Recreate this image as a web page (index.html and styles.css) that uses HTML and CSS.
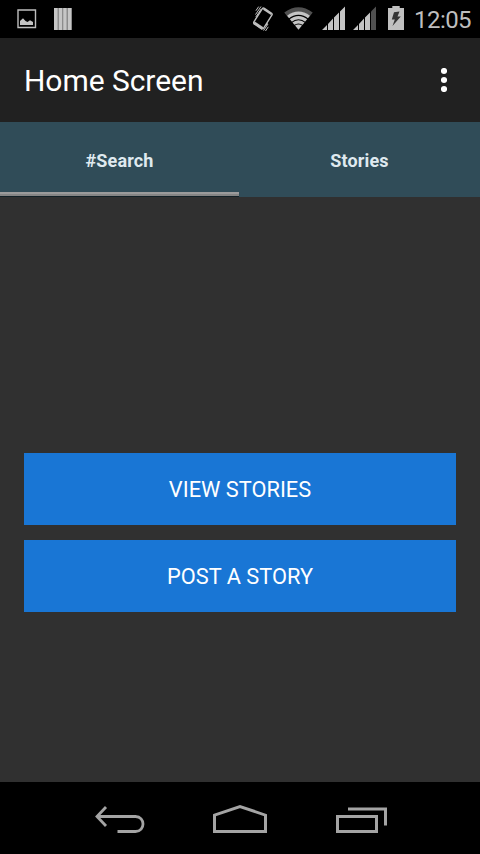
FILE: index.html
```html
<!DOCTYPE html>
<html lang="en">
<head>
<meta charset="utf-8">
<title>Home Screen</title>
<link rel="stylesheet" href="styles.css">
</head>
<body>
<div class="screen">
  <div class="status">
    <div class="notices">
      <svg width="20" height="20" viewBox="0 0 20 20"><path d="M1 1H18.5V18.5H1Z" fill="none" stroke="#bebebe" stroke-width="1.4"/><path d="M3 16V12L6 9.2L8.5 12L10.5 13L13 11.3L16 13V16Z" fill="#c4c4c4"/></svg>
      <svg width="18" height="22" viewBox="0 0 18 22"><path d="M0 0H18V22H0Z" fill="#8c8c8c"/><path d="M0 0H3.5V22H0ZM5 0H8V22H5ZM9.3 0H12.5V22H9.3ZM14 0H17V22H14Z" fill="#c6c6c6"/></svg>
    </div>
    <div class="system">
      <svg class="vibrate" width="22" height="26" viewBox="0 0 22 26"><g fill="none" stroke="#bebebe"><path d="M12.4 2.3L19.6 7.2Q20.5 8 20 9L11.5 22.3Q10.6 23.3 9.5 22.6L2.2 17.6Q1.3 16.9 1.9 15.8L10.2 2.8Q11.2 1.6 12.4 2.3Z" stroke-width="1.4"/><path d="M2 16.8L10.5 22.6" stroke-width="3"/><path d="M11.5 3L19.5 8.3" stroke-width="1.8"/><path d="M9 .5L3.5 8.6M6.7.6L3.9 4.7M9.2 3L3.8 11M11.6 24.6L16 18M13.5 25L16.3 20.8M13.5 20L15.5 17" stroke-width="1"/></g></svg>
      <svg class="wifi" width="29" height="23" viewBox="0 0 29 23"><path d="M.3 5.5Q14.5-5 28.7 5.5L26 9Q14.5 1 3 9Z" fill="#505050"/><path d="M3 8.7Q14.5.3 26 8.7L14.5 22.8Z" fill="#c4c4c4"/><path d="M4.5 12.4Q14.5 4.3 24.5 12.4M7.3 15.6Q14.5 9.8 21.7 15.6M10 18.6Q14.5 15.4 19 18.6" fill="none" stroke="#000" stroke-width="1.1"/></svg>
      <svg class="signal" width="23" height="25" viewBox="0 0 23 25"><path d="M0 24L5 19V24ZM6 24V18L11 12.5V24ZM12 24V11.5L17 6.5V24ZM18 24V5.5L23 .5V24Z" fill="#c4c4c4"/></svg>
      <svg class="signal second" width="23" height="25" viewBox="0 0 23 25"><path d="M0 24L5 19V24ZM6 24V18L11 12.5V24ZM12 24V11.5L17 6.5V24Z" fill="#c4c4c4"/><path d="M18 24V5.5L23 .5V24Z" fill="#505050"/></svg>
      <svg class="battery" width="16" height="24" viewBox="0 0 16 24"><path d="M4.3 0H11.7V2H16V24H0V2H4.3Z" fill="#c0c0c0"/><path d="M6 6.3L11.5 5.5L9.5 10.5H12.8L4.5 20L6.8 13.5H3.8Z" fill="#333"/></svg>
      <span class="clock">12:05</span>
    </div>
  </div>
  <header class="appbar">
    <h1>Home Screen</h1>
    <svg width="6" height="24" viewBox="0 0 6 24" fill="#fff"><circle cx="3" cy="3" r="3.1"/><circle cx="3" cy="12" r="3.1"/><circle cx="3" cy="21" r="3.1"/></svg>
  </header>
  <nav class="tabs">
    <div class="tab active">#Search</div>
    <div class="tab">Stories</div>
  </nav>
  <main class="content">
    <button>VIEW STORIES</button>
    <button>POST A STORY</button>
  </main>
  <footer class="navbar">
    <svg class="back" width="50" height="27" viewBox="0 0 50 27"><path d="M11 1L2 10.5L11 20M2 10.5H40.5C50.5 10.5 50.5 25.5 40.5 25.5H22.5" fill="none" stroke="#a4a4a4" stroke-width="2.8"/></svg>
    <svg class="home" width="54" height="29" viewBox="0 0 54 29"><path d="M1.5 11.2L27 2.5L52.5 11.2V27.5H1.5Z" fill="none" stroke="#a4a4a4" stroke-width="3"/></svg>
    <svg class="recent" width="51" height="26" viewBox="0 0 51 26"><path d="M1.5 9.5H40.5V24.5H1.5ZM12 2H49.5V18.5" fill="none" stroke="#a4a4a4" stroke-width="3"/></svg>
  </footer>
</div>
</body>
</html>
```
FILE: styles.css
```css
* { box-sizing: border-box; }
body { margin: 0; background: #303030; font-family: Roboto, sans-serif; }
svg { display: block; flex: none; }
.screen { width: 480px; height: 854px; display: flex; flex-direction: column; background: #303030; }
.status { height: 38px; flex: none; background: #000; display: flex; justify-content: space-between; padding: 0 9px 0 17px; }
.notices { display: flex; align-items: center; gap: 17px; }
.system { display: flex; align-items: flex-start; }
.vibrate { margin-top: 6px; }
.wifi { margin: 7px 0 0 10px; }
.signal { margin: 6px 0 0 9px; }
.second { margin-left: 8px; }
.battery { margin: 6px 0 0 12px; }
.clock { width: 57px; margin-left: 10px; font-size: 24px; letter-spacing: -0.55px; line-height: 40px; color: #bebebe; white-space: nowrap; }
.appbar { height: 84px; flex: none; background: #212121; display: flex; align-items: center; justify-content: space-between; padding: 0 33px 0 24px; }
h1 { margin: 0; padding-top: 2px; font-size: 30px; font-weight: 400; line-height: 36px; letter-spacing: -0.05px; color: #fff; }
.tabs { height: 75px; flex: none; background: #304c58; display: flex; }
.tab { flex: 0 0 239px; padding-top: 2px; text-align: center; font-size: 18px; font-weight: 700; line-height: 74px; letter-spacing: 0.15px; color: #dfe9ef; }
.tab + .tab { flex-basis: 241px; }
.active { background: linear-gradient(#9b9b9b 0 2px, #858585 2px 4px, #132127 4px) bottom / 100% 5px no-repeat; }
.content { flex: 1; display: flex; flex-direction: column; justify-content: center; gap: 15px; padding: 85px 24px 0; }
button { height: 72px; padding: 2px 0 0; border: 0; background: #1976d5; color: #fff; font: 21.8px Roboto, sans-serif; }
.navbar { height: 72px; flex: none; background: #000; display: flex; align-items: flex-start; padding-left: 95px; }
.back { margin-top: 24px; }
.home { margin: 22px 0 0 68px; }
.recent { margin: 25px 0 0 69px; }
```
